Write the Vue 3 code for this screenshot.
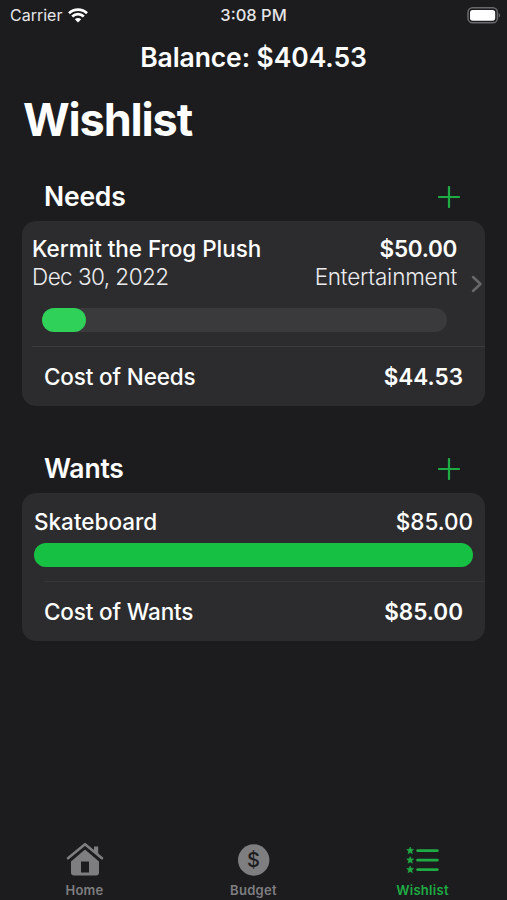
<template>
  <div class="screen">
    <header class="status-bar">
      <div class="carrier">
        <span>Carrier</span>
        <svg class="wifi" width="20" height="15" viewBox="0 0 20 15" fill="none" stroke="#fff" stroke-width="2.7">
          <path d="M1 5.2C6 0.3 14 0.3 19 5.2" />
          <path d="M4.2 8.5C7.6 5.3 12.4 5.3 15.8 8.5" />
          <path d="M10 14.6L6.8 11.3C8.6 9.7 11.4 9.7 13.2 11.3Z" fill="#fff" stroke="none" />
        </svg>
      </div>
      <span class="time">3:08 PM</span>
      <svg class="battery" width="34" height="17" viewBox="0 0 34 17">
        <rect x="1" y="0.8" width="29.4" height="15" rx="4.6" fill="none" stroke="#69696b" stroke-width="1.5" />
        <rect x="3" y="2.9" width="25.2" height="10.9" rx="2.8" fill="#fff" />
        <path d="M31.8 6v4.6c1.8-.8 1.8-3.8 0-4.6Z" fill="#69696b" />
      </svg>
    </header>

    <div class="balance">Balance: {{ money(balance) }}</div>
    <h1>Wishlist</h1>

    <section v-for="group in groups" :key="group.name" :class="['group', group.name.toLowerCase()]">
      <div class="group-header">
        <h2>{{ group.name }}</h2>
        <button class="add" :aria-label="'Add to ' + group.name">
          <svg width="22" height="22" viewBox="0 0 22 22" stroke="#1fab43" stroke-width="2.2" stroke-linecap="round">
            <path d="M11 1v20M1 11h20" />
          </svg>
        </button>
      </div>

      <div class="card">
        <div v-for="item in group.items" :key="item.name" class="item">
          <div class="item-body">
            <div class="line strong">
              <span class="item-name">{{ item.name }}</span>
              <span class="amount">{{ money(item.cost) }}</span>
            </div>
            <div v-if="item.date" class="line light">
              <span class="date">{{ item.date }}</span>
              <span class="category">{{ item.category }}</span>
            </div>
            <div class="track">
              <div class="fill" :style="{ width: item.progress + '%' }"></div>
            </div>
          </div>
          <svg v-if="item.date" class="chevron" width="12" height="18" viewBox="0 0 12 18" fill="none" stroke="#68686b" stroke-width="2.5" stroke-linecap="round" stroke-linejoin="round">
            <path d="M2 2l7.5 7L2 16" />
          </svg>
        </div>
        <div class="divider"></div>
        <div class="total">
          <span class="total-label">Cost of {{ group.name }}</span>
          <span class="total-amount">{{ money(group.total) }}</span>
        </div>
      </div>
    </section>

    <nav class="tabs">
      <a v-for="tab in tabs" :key="tab" :class="['tab', { active: tab === current }]" @click="current = tab">
        <svg v-if="tab === 'Home'" width="38" height="36" viewBox="0 0 38 36">
          <path d="M19 7.8L5 19.4V31.5Q5 34.5 8 34.5H30Q33 34.5 33 31.5V19.4ZM15 20.5H23V31.5H15Z" fill="currentColor" fill-rule="evenodd" />
          <path d="M28 5.5h4.2v9.5L28 11.3Z" fill="currentColor" />
          <path d="M19 5L3 18.4L5 20.4L19 8.6L33 20.4L35 18.4Z" fill="#1c1c1e" />
          <path d="M2 17.2L19 3.2L36 17.2" fill="none" stroke="currentColor" stroke-width="2.6" stroke-linecap="round" stroke-linejoin="round" />
        </svg>
        <svg v-else-if="tab === 'Budget'" width="38" height="36" viewBox="0 0 38 36">
          <circle cx="18.7" cy="19" r="15.7" fill="currentColor" />
          <text class="dollar" x="18.7" y="25.8" text-anchor="middle" fill="#1c1c1e">$</text>
        </svg>
        <svg v-else width="38" height="36" viewBox="0 0 38 36">
          <g v-for="y in [9.5, 19, 28.5]" :key="y" :transform="`translate(6.2 ${y})`" fill="currentColor">
            <path d="M0-3.5L1-1.2L3.5-1L1.6.7L2.2 3.2L0 1.9L-2.2 3.2L-1.6.7L-3.5-1L-1-1.2Z" stroke="currentColor" stroke-width="0.5" />
            <rect x="6" y="-1.3" width="22.5" height="2.9" rx="1.4" />
          </g>
        </svg>
        <span>{{ tab }}</span>
      </a>
    </nav>
  </div>
</template>

<script setup>
import { ref } from 'vue';

const balance = ref(404.53);
const current = ref('Wishlist');
const tabs = ['Home', 'Budget', 'Wishlist'];

const groups = ref([
  {
    name: 'Needs',
    total: 44.53,
    items: [
      { name: 'Kermit the Frog Plush', cost: 50, date: 'Dec 30, 2022', category: 'Entertainment', progress: 10.94 },
    ],
  },
  {
    name: 'Wants',
    total: 85,
    items: [{ name: 'Skateboard', cost: 85, progress: 100 }],
  },
]);

const money = (value) => '$' + value.toFixed(2);
</script>

<style>
body {
  background: #1c1c1e;
}
</style>

<style scoped>
.screen {
  display: flex;
  flex-direction: column;
  box-sizing: border-box;
  height: 900px;
  overflow: hidden;
  background: #1c1c1e;
  color: #fff;
  font-family: Inter, "Liberation Sans", sans-serif;
  white-space: nowrap;
}

.status-bar {
  display: grid;
  grid-template-columns: 1fr auto 1fr;
  align-items: center;
  height: 30px;
  padding: 0 6px 0 10px;
  font-size: 16px;
  color: #e6e6e8;
}

.carrier {
  display: flex;
  align-items: center;
  gap: 6px;
}

.time {
  margin-right: 4px;
  font-size: 16.5px;
  font-weight: 500;
}

.battery {
  justify-self: end;
}

.balance {
  height: 56px;
  line-height: 54px;
  text-align: center;
  font-size: 26.5px;
  font-weight: 600;
  letter-spacing: -0.1px;
}

h1 {
  margin: 0;
  padding-left: 23px;
  height: 68px;
  line-height: 67px;
  font-size: 45px;
  font-weight: 700;
  letter-spacing: -1.15px;
}

.group {
  margin: 18px 22px 20px;
}

.group-header {
  display: flex;
  justify-content: space-between;
  align-items: center;
  height: 49px;
  padding: 0 25px 0 22px;
}

h2 {
  margin: 0;
  padding-bottom: 1px;
  font-size: 26.5px;
  line-height: 32px;
  font-weight: 600;
  letter-spacing: -0.2px;
}

.add {
  display: flex;
  padding: 0;
  border: none;
  background: none;
}

.card {
  border-radius: 14px;
  background: #2c2c2e;
  overflow: hidden;
}

.item {
  display: flex;
  align-items: center;
}

.item-body {
  flex: 1;
}

.line {
  display: flex;
  justify-content: space-between;
  height: 28px;
  line-height: 28px;
  font-size: 22.5px;
}

.strong {
  font-weight: 500;
}

.light {
  font-weight: 300;
  color: #ececee;
}

.date {
  letter-spacing: -0.55px;
}

.category {
  letter-spacing: -0.2px;
}

.track {
  height: 24px;
  border-radius: 12px;
  background: #3a3a3c;
}

.fill {
  height: 100%;
  border-radius: 12px;
  background: #30d158;
}

.divider {
  height: 1px;
  background: #3a3a3c;
}

.total {
  display: flex;
  justify-content: space-between;
  align-items: center;
  height: 59px;
  padding: 0 22px;
  font-size: 22.5px;
  font-weight: 500;
}

.total-label {
  letter-spacing: -0.15px;
}

.total-amount {
  font-weight: 600;
}

.needs .item {
  height: 125px;
  padding-left: 10px;
}

.needs .item-name {
  letter-spacing: -0.05px;
}

.needs .amount {
  font-weight: 600;
  letter-spacing: -0.3px;
}

.needs .track {
  margin: 17px 10px 0;
}

.needs .chevron {
  margin: 0 2px 0 14px;
}

.needs .divider {
  margin-left: 10px;
}

.wants .item {
  height: 88px;
  padding: 0 12px;
}

.wants .line {
  line-height: 30px;
}

.wants .track {
  margin-top: 8px;
}

.wants .fill {
  background: #16c042;
}

.wants .divider {
  margin-left: 22px;
  background: #363638;
}

.tabs {
  display: grid;
  grid-template-columns: repeat(3, 1fr);
  margin-top: auto;
  height: 59px;
}

.tab {
  display: flex;
  flex-direction: column;
  align-items: center;
  font-size: 13px;
  font-weight: 600;
  line-height: 16px;
  letter-spacing: 0.3px;
  color: #7e7e80;
}

.tab span {
  margin-top: 5px;
}

.active {
  color: #1fab43;
}

.dollar {
  font-size: 20px;
  font-weight: 500;
}
</style>
